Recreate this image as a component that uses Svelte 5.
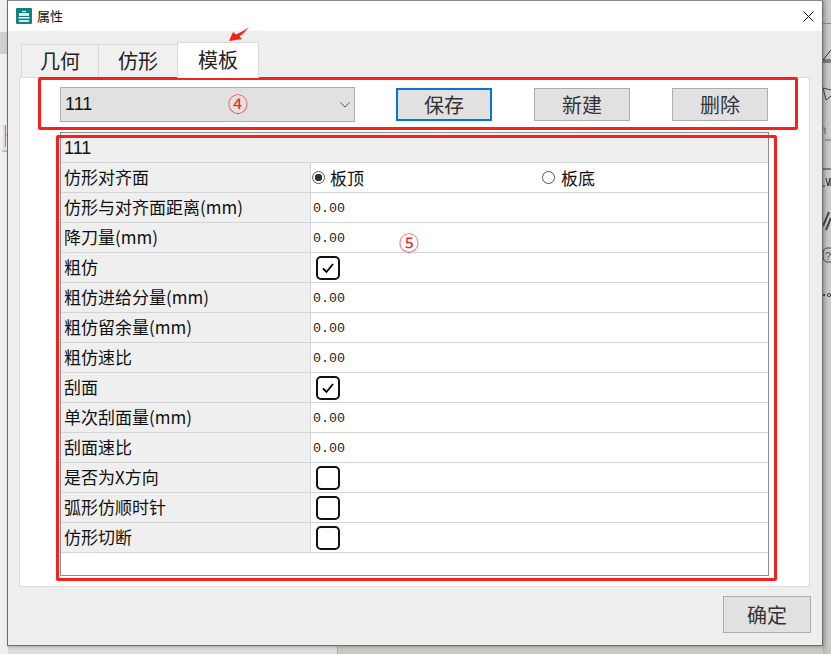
<script>
  const rows = [
    { label: '仿形对齐面', type: 'radio' },
    { label: '仿形与对齐面距离(mm)', type: 'num' },
    { label: '降刀量(mm)', type: 'num' },
    { label: '粗仿', type: 'check', on: true },
    { label: '粗仿进给分量(mm)', type: 'num' },
    { label: '粗仿留余量(mm)', type: 'num' },
    { label: '粗仿速比', type: 'num' },
    { label: '刮面', type: 'check', on: true },
    { label: '单次刮面量(mm)', type: 'num' },
    { label: '刮面速比', type: 'num' },
    { label: '是否为X方向', type: 'check', on: false },
    { label: '弧形仿顺时针', type: 'check', on: false },
    { label: '仿形切断', type: 'check', on: false }
  ];
</script>

<div class="desk">
  <div class="bg-left"></div>
  <div class="bg-band"></div>
  <div class="bg-bottom"></div>
  <div class="bg-right"></div>
  <svg class="bg-marks" width="7" height="30" viewBox="0 0 7 30">
    <path d="M4 0V24" stroke="#e8b8b8" fill="none" />
    <path d="M5.5 0V22M5 10H7M2 26H7" stroke="#6f95c8" fill="none" />
  </svg>
  <svg class="bg-icons" width="8" height="310" viewBox="0 0 8 310">
    <path d="M0 23.5H8" stroke="#888" />
    <path d="M0 60 L8 50 M0 60 H8 M0 62 H8" stroke="#333" fill="none" />
    <path d="M0 88 L8 90 M0 88 L3 100 L8 96" stroke="#444" fill="none" />
    <path d="M0 128 H2 V134 M8 140 H2" stroke="#666" fill="none" />
    <path d="M0 169 H8 M0 186 H2 M3 178 L5 186 L7 178 V186" stroke="#333" fill="none" />
    <path d="M0 226 L6 212 M3 230 L8 218" stroke="#444" stroke-width="2" fill="none" />
    <path d="M8 248 H4 Q0 248 0 255 Q0 262 4 262 H8" stroke="#444" fill="none" />
    <text x="2" y="260" font-size="11" fill="#555" font-family="Liberation Sans">?</text>
    <circle cx="1" cy="295" r="1.2" fill="#444" />
    <circle cx="6" cy="295" r="1.6" fill="none" stroke="#444" />
  </svg>

  <div class="window">
    <header class="titlebar">
      <svg class="app" width="16" height="16" viewBox="0 0 16 16">
        <rect width="16" height="16" rx="1" fill="#12827c" />
        <rect x="3" y="5" width="10" height="3" fill="#d8eeee" />
        <rect x="2.5" y="9" width="11" height="1.5" fill="#fff" />
        <rect x="3" y="12" width="10" height="2" fill="#cfe8e8" />
        <path d="M6 3.5h4" stroke="#fff" stroke-width="1.2" />
      </svg>
      <span class="title">属性</span>
      <svg class="close" width="11" height="11" viewBox="0 0 11 11">
        <path d="M0.5 0.5L10.5 10.5M10.5 0.5L0.5 10.5" stroke="#111" stroke-width="1" />
      </svg>
    </header>

    <div class="body">
      <div class="tabs">
        <div class="tab">几何</div>
        <div class="tab">仿形</div>
        <div class="tab active">模板</div>
      </div>

      <div class="pane">
        <div class="toolbar">
          <div class="combo">
            <span>111</span>
            <svg width="10" height="6" viewBox="0 0 10 6"><path d="M0.5 0.5L5 5L9.5 0.5" stroke="#555" fill="none" /></svg>
          </div>
          <button class="btn primary">保存</button>
          <button class="btn">新建</button>
          <button class="btn">删除</button>
        </div>

        <div class="table">
          <div class="group">111</div>
          {#each rows as row}
            <div class="row">
              <div class="label">{row.label}</div>
              <div class="value">
                {#if row.type === 'radio'}
                  <div class="radios">
                    <label class="radio"><i class="dot on"></i>板顶</label>
                    <label class="radio second"><i class="dot"></i>板底</label>
                  </div>
                {:else if row.type === 'num'}
                  <span class="num">0.00</span>
                {:else}
                  <span class="check">
                    {#if row.on}
                      <svg width="14" height="12" viewBox="0 0 14 12"><path d="M2 6.5L5.5 10L12 2" stroke="#000" stroke-width="1.8" fill="none" /></svg>
                    {/if}
                  </span>
                {/if}
              </div>
            </div>
          {/each}
        </div>
      </div>

      <div class="footer">
        <button class="btn ok">确定</button>
      </div>
    </div>
  </div>

  <div class="mark box4"></div>
  <div class="mark box5"></div>
  <span class="num-mark n4">④</span>
  <span class="num-mark n5">⑤</span>
  <svg class="arrow" width="24" height="17" viewBox="0 0 24 17">
    <path d="M1 15 L5 6 L8 8.5 C12 6.5 17 4 21 1 C18 5 15 8 11.5 10.5 L14 13 Z" fill="#f5211a" />
  </svg>
</div>

<style>
  :global(body) {
    margin: 0;
  }
  .desk {
    position: relative;
    width: 831px;
    height: 654px;
    overflow: hidden;
    background: #dcdcdc;
    font-family: "Noto Sans CJK SC", "Liberation Sans", sans-serif;
    color: #111;
  }
  .bg-left {
    position: absolute;
    left: 0;
    top: 0;
    width: 8px;
    height: 654px;
    background: #f0f0f0;
  }
  .bg-band {
    position: absolute;
    left: 0;
    top: 32px;
    width: 8px;
    height: 22px;
    background: #cfcfcf;
  }
  .bg-bottom {
    position: absolute;
    left: 337px;
    right: 0;
    bottom: 0;
    height: 8px;
    background: #c8c8c0;
    border-left: 1px solid #b0b0b0;
  }
  .bg-right {
    position: absolute;
    right: 0;
    top: 0;
    width: 8px;
    height: 654px;
    background: linear-gradient(90deg, #b4b4b4, #cfcfcf);
  }
  .bg-marks {
    position: absolute;
    left: 0;
    top: 125px;
  }
  .bg-icons {
    position: absolute;
    right: 0;
    top: 0;
  }
  .window {
    position: absolute;
    left: 7px;
    top: 0;
    width: 816px;
    height: 646px;
    box-sizing: border-box;
    border: 1px solid #6f6f6f;
    border-top: 1px solid #8a8a8a;
    display: flex;
    flex-direction: column;
    background: #eeeeee;
    box-shadow: 1px 1px 3px rgba(0, 0, 0, 0.25);
  }
  .titlebar {
    height: 30px;
    flex: none;
    background: #fff;
    display: flex;
    align-items: center;
    padding: 0 8px 0 8px;
  }
  .app {
    margin-right: 5px;
  }
  .title {
    font-size: 13px;
    line-height: 16px;
  }
  .close {
    margin-left: auto;
  }
  .body {
    flex: 1;
    display: flex;
    flex-direction: column;
    padding: 11px 12px 0 11px;
    min-height: 0;
  }
  .tabs {
    display: flex;
    height: 35px;
    flex: none;
    margin-left: 2px;
    position: relative;
    z-index: 1;
    align-items: flex-start;
  }
  .tab {
    width: 77px;
    height: 33px;
    margin-top: 2px;
    box-sizing: border-box;
    border: 1px solid #d9d9d9;
    border-bottom: none;
    border-right: none;
    background: #f0f0f0;
    font-size: 20px;
    line-height: 31px;
    text-align: center;
    color: #222;
  }
  .tab:nth-child(2) {
    width: 79px;
  }
  .tab.active {
    width: 82px;
    height: 36px;
    margin-top: 0;
    line-height: 34px;
    background: #fff;
    border-right: 1px solid #d9d9d9;
  }
  .pane {
    height: 510px;
    flex: none;
    box-sizing: border-box;
    background: #fff;
    border: 1px solid #dcdcdc;
    padding: 9px 0 0 40px;
    width: 791px;
  }
  .toolbar {
    display: flex;
    align-items: center;
    height: 35px;
  }
  .combo {
    width: 295px;
    height: 35px;
    box-sizing: border-box;
    background: #e1e1e1;
    border: 1px solid #adadad;
    display: flex;
    align-items: center;
    justify-content: space-between;
    padding: 0 4px 0 4px;
    font-size: 18px;
    font-family: "Liberation Sans", sans-serif;
  }
  .btn {
    width: 96px;
    height: 33px;
    margin: 0;
    padding: 0;
    box-sizing: border-box;
    background: #e1e1e1;
    border: 1px solid #adadad;
    font: inherit;
    font-size: 20px;
    line-height: 1;
    color: #333;
  }
  .toolbar .btn {
    margin-left: 42px;
  }
  .toolbar .btn.primary {
    margin-left: 41px;
    border: 2px solid #0078d7;
  }
  .table {
    margin-top: 10px;
    width: 709px;
    height: 444px;
    box-sizing: border-box;
    border: 1px solid #8f8f8f;
    background: #fff;
  }
  .group {
    height: 28px;
    padding-top: 1px;
    line-height: 28px;
    background: #efefef;
    padding-left: 3px;
    font-size: 18px;
    font-family: "Liberation Sans", sans-serif;
    border-bottom: 1px solid #d4d4d4;
  }
  .row {
    display: flex;
    height: 29px;
    border-bottom: 1px solid #d4d4d4;
  }
  .label {
    width: 250px;
    flex: none;
    box-sizing: border-box;
    background: #efefef;
    border-right: 1px solid #d4d4d4;
    padding-left: 3px;
    font-size: 17px;
    line-height: 27px;
    height: 29px;
    white-space: nowrap;
  }
  .value {
    flex: 1;
    display: flex;
    align-items: center;
    padding-left: 2px;
  }
  .num {
    font-family: "Liberation Mono", monospace;
    font-size: 13.33px;
    color: #222;
    padding-top: 2px;
  }
  .check {
    margin-left: 3px;
    width: 24px;
    height: 24px;
    box-sizing: border-box;
    border: 2px solid #111;
    border-radius: 5px;
    display: flex;
    align-items: center;
    justify-content: center;
    background: #fff;
  }
  .radios {
    display: flex;
    align-items: center;
  }
  .radio {
    display: flex;
    align-items: center;
    gap: 5px;
    font-size: 17px;
    width: 231px;
  }
  .radio .dot {
    margin-left: -1px;
  }
  .radio.second .dot {
    margin-left: -2px;
  }
  .radio.second {
    gap: 6px;
  }
  .dot {
    width: 13px;
    height: 13px;
    box-sizing: border-box;
    border: 1px solid #555;
    border-radius: 50%;
    background: #fff;
    display: block;
  }
  .dot.on {
    background: radial-gradient(circle, #333 0 3.5px, #fff 4px);
  }
  .footer {
    display: flex;
    justify-content: flex-end;
    padding-top: 9px;
    width: 791px;
  }
  .btn.ok {
    width: 88px;
    height: 37px;
    margin-right: -1px;
  }
  .mark {
    position: absolute;
    box-sizing: border-box;
    border: 3px solid #f5211a;
    border-radius: 2px;
  }
  .box4 {
    left: 38px;
    top: 77px;
    width: 760px;
    height: 53px;
  }
  .box5 {
    left: 56px;
    top: 135px;
    width: 721px;
    height: 446px;
  }
  .num-mark {
    position: absolute;
    color: #f5211a;
    font-size: 20px;
    line-height: 24px;
  }
  .n4 {
    left: 228px;
    top: 92px;
  }
  .n5 {
    left: 399px;
    top: 231px;
  }
  .arrow {
    position: absolute;
    left: 228px;
    top: 26px;
  }
</style>
